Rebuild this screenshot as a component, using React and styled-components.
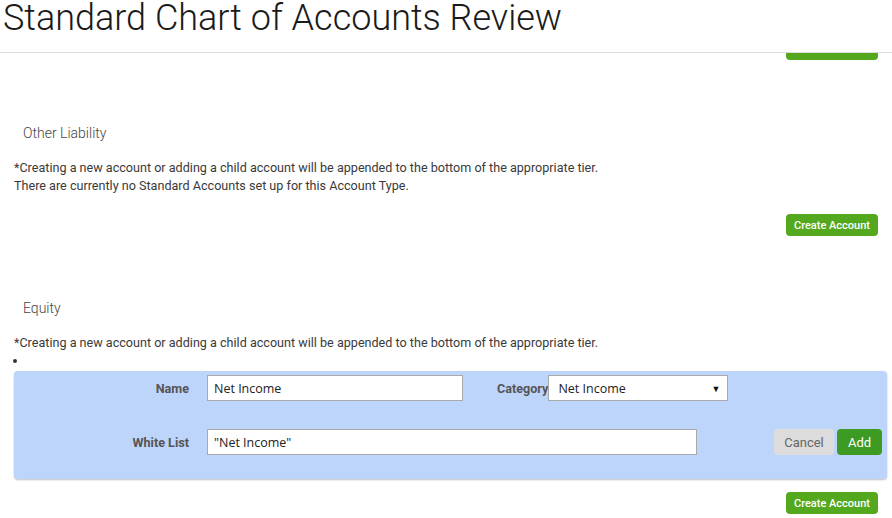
import React from 'react';
import styled, { createGlobalStyle } from 'styled-components';

const GlobalStyle = createGlobalStyle`
    body {
        margin: 0;
        background: #fff;
        font-family: Roboto, "Liberation Sans", sans-serif;
        color: #333;
    }
`;

const Page = styled.div`
    width: 892px;
    height: 518px;
    overflow: hidden;
`;

const Header = styled.header`
    position: relative;
    z-index: 1;
    display: flow-root;
    height: 52px;
    padding: 0 3px;
    background: #fff;
    border-bottom: 1px solid #ddd;
`;

const Title = styled.h1`
    margin: -3px 0 0;
    font-size: 36px;
    line-height: 42px;
    font-weight: 300;
    color: #1a1a1a;
`;

const ButtonRow = styled.div`
    display: flex;
    justify-content: flex-end;
    padding-right: 14px;
    margin-top: ${props => props.offset}px;
`;

const CreateButton = styled.button`
    width: 92px;
    height: 22px;
    padding: 0;
    border: none;
    border-radius: 4px;
    background: #54a81e;
    color: #fff;
    font-family: Roboto, "Liberation Sans", sans-serif;
    font-size: 11px;
    font-weight: 500;
`;

const Section = styled.section`
    padding-top: ${props => props.top || 62}px;
`;

const Heading = styled.h3`
    margin: 0;
    padding-left: 23px;
    font-size: 14px;
    line-height: 20px;
    font-weight: 300;
    color: #444;
`;

const Note = styled.p`
    margin: 16px 0 0;
    padding-left: 14px;
    font-size: 12.6px;
    line-height: 18px;
    color: #3a3a3a;
`;

const List = styled.ul`
    margin: 0;
    padding: 0 0 0 13px;
    list-style: disc inside;
    font-size: 13px;
    line-height: 18px;
`;

const Panel = styled.div`
    margin: 1px 5px 0 14px;
    padding: 4px 5px 24px 0;
    background: #bdd4fb;
    border-radius: 4px;
    box-shadow: 0 1px 2px rgba(0, 0, 0, 0.25);
    display: flex;
    flex-direction: column;
    gap: 28px;
`;

const FormRow = styled.div`
    display: flex;
    align-items: center;
    height: 26px;
`;

const Label = styled.label`
    width: ${props => props.width || 'auto'};
    margin-right: ${props => props.gap || 0}px;
    margin-left: ${props => props.indent || 0}px;
    text-align: right;
    font-size: 12.6px;
    font-weight: 700;
    color: #555;
`;

const TextInput = styled.input`
    box-sizing: border-box;
    width: ${props => props.width}px;
    height: 26px;
    padding: 0 6px;
    border: 1px solid #a9a9a9;
    background: #fff;
    font-family: "Open Sans", "Liberation Sans", sans-serif;
    font-size: 12.5px;
    color: #222;
    outline: none;
`;

const SelectBox = styled.div`
    box-sizing: border-box;
    width: 180px;
    height: 26px;
    padding: 0 7px 0 9px;
    display: flex;
    align-items: center;
    justify-content: space-between;
    border: 1px solid #a9a9a9;
    background: #fff;
    font-family: "Open Sans", "Liberation Sans", sans-serif;
    font-size: 12.5px;
    color: #222;
`;

const Arrow = styled.span`
    font-size: 9px;
    color: #111;
`;

const Spacer = styled.div`
    flex: 1;
`;

const ActionButton = styled.button`
    height: 26px;
    width: ${props => props.width}px;
    margin-left: ${props => props.gap || 0}px;
    padding: 0;
    border: none;
    border-radius: 4px;
    background: ${props => (props.primary ? '#3d9a22' : '#dcdcdc')};
    color: ${props => (props.primary ? '#fff' : '#666')};
    font-family: Roboto, "Liberation Sans", sans-serif;
    font-size: 13px;
`;

const note = '*Creating a new account or adding a child account will be appended to the bottom of the appropriate tier.';

const App = () => (
    <Page>
        <GlobalStyle />
        <Header>
            <Title>Standard Chart of Accounts Review</Title>
        </Header>
        <ButtonRow offset={-15}>
            <CreateButton>Create Account</CreateButton>
        </ButtonRow>

        <Section top={63}>
            <Heading>Other Liability</Heading>
            <Note>
                {note}
                <br />
                There are currently no Standard Accounts set up for this Account Type.
            </Note>
            <ButtonRow offset={19}>
                <CreateButton>Create Account</CreateButton>
            </ButtonRow>
        </Section>

        <Section>
            <Heading>Equity</Heading>
            <Note>{note}</Note>
            <List>
                <li />
            </List>
            <Panel>
                <FormRow>
                    <Label width="175px" gap={18}>Name</Label>
                    <TextInput width={256} defaultValue="Net Income" />
                    <Label indent={34}>Category</Label>
                    <SelectBox>
                        <span>Net Income</span>
                        <Arrow>▼</Arrow>
                    </SelectBox>
                </FormRow>
                <FormRow>
                    <Label width="175px" gap={18}>White List</Label>
                    <TextInput width={490} defaultValue={'"Net Income"'} />
                    <Spacer />
                    <ActionButton width={60}>Cancel</ActionButton>
                    <ActionButton width={45} gap={3} primary>Add</ActionButton>
                </FormRow>
            </Panel>
            <ButtonRow offset={13}>
                <CreateButton>Create Account</CreateButton>
            </ButtonRow>
        </Section>
    </Page>
);

export default App;
